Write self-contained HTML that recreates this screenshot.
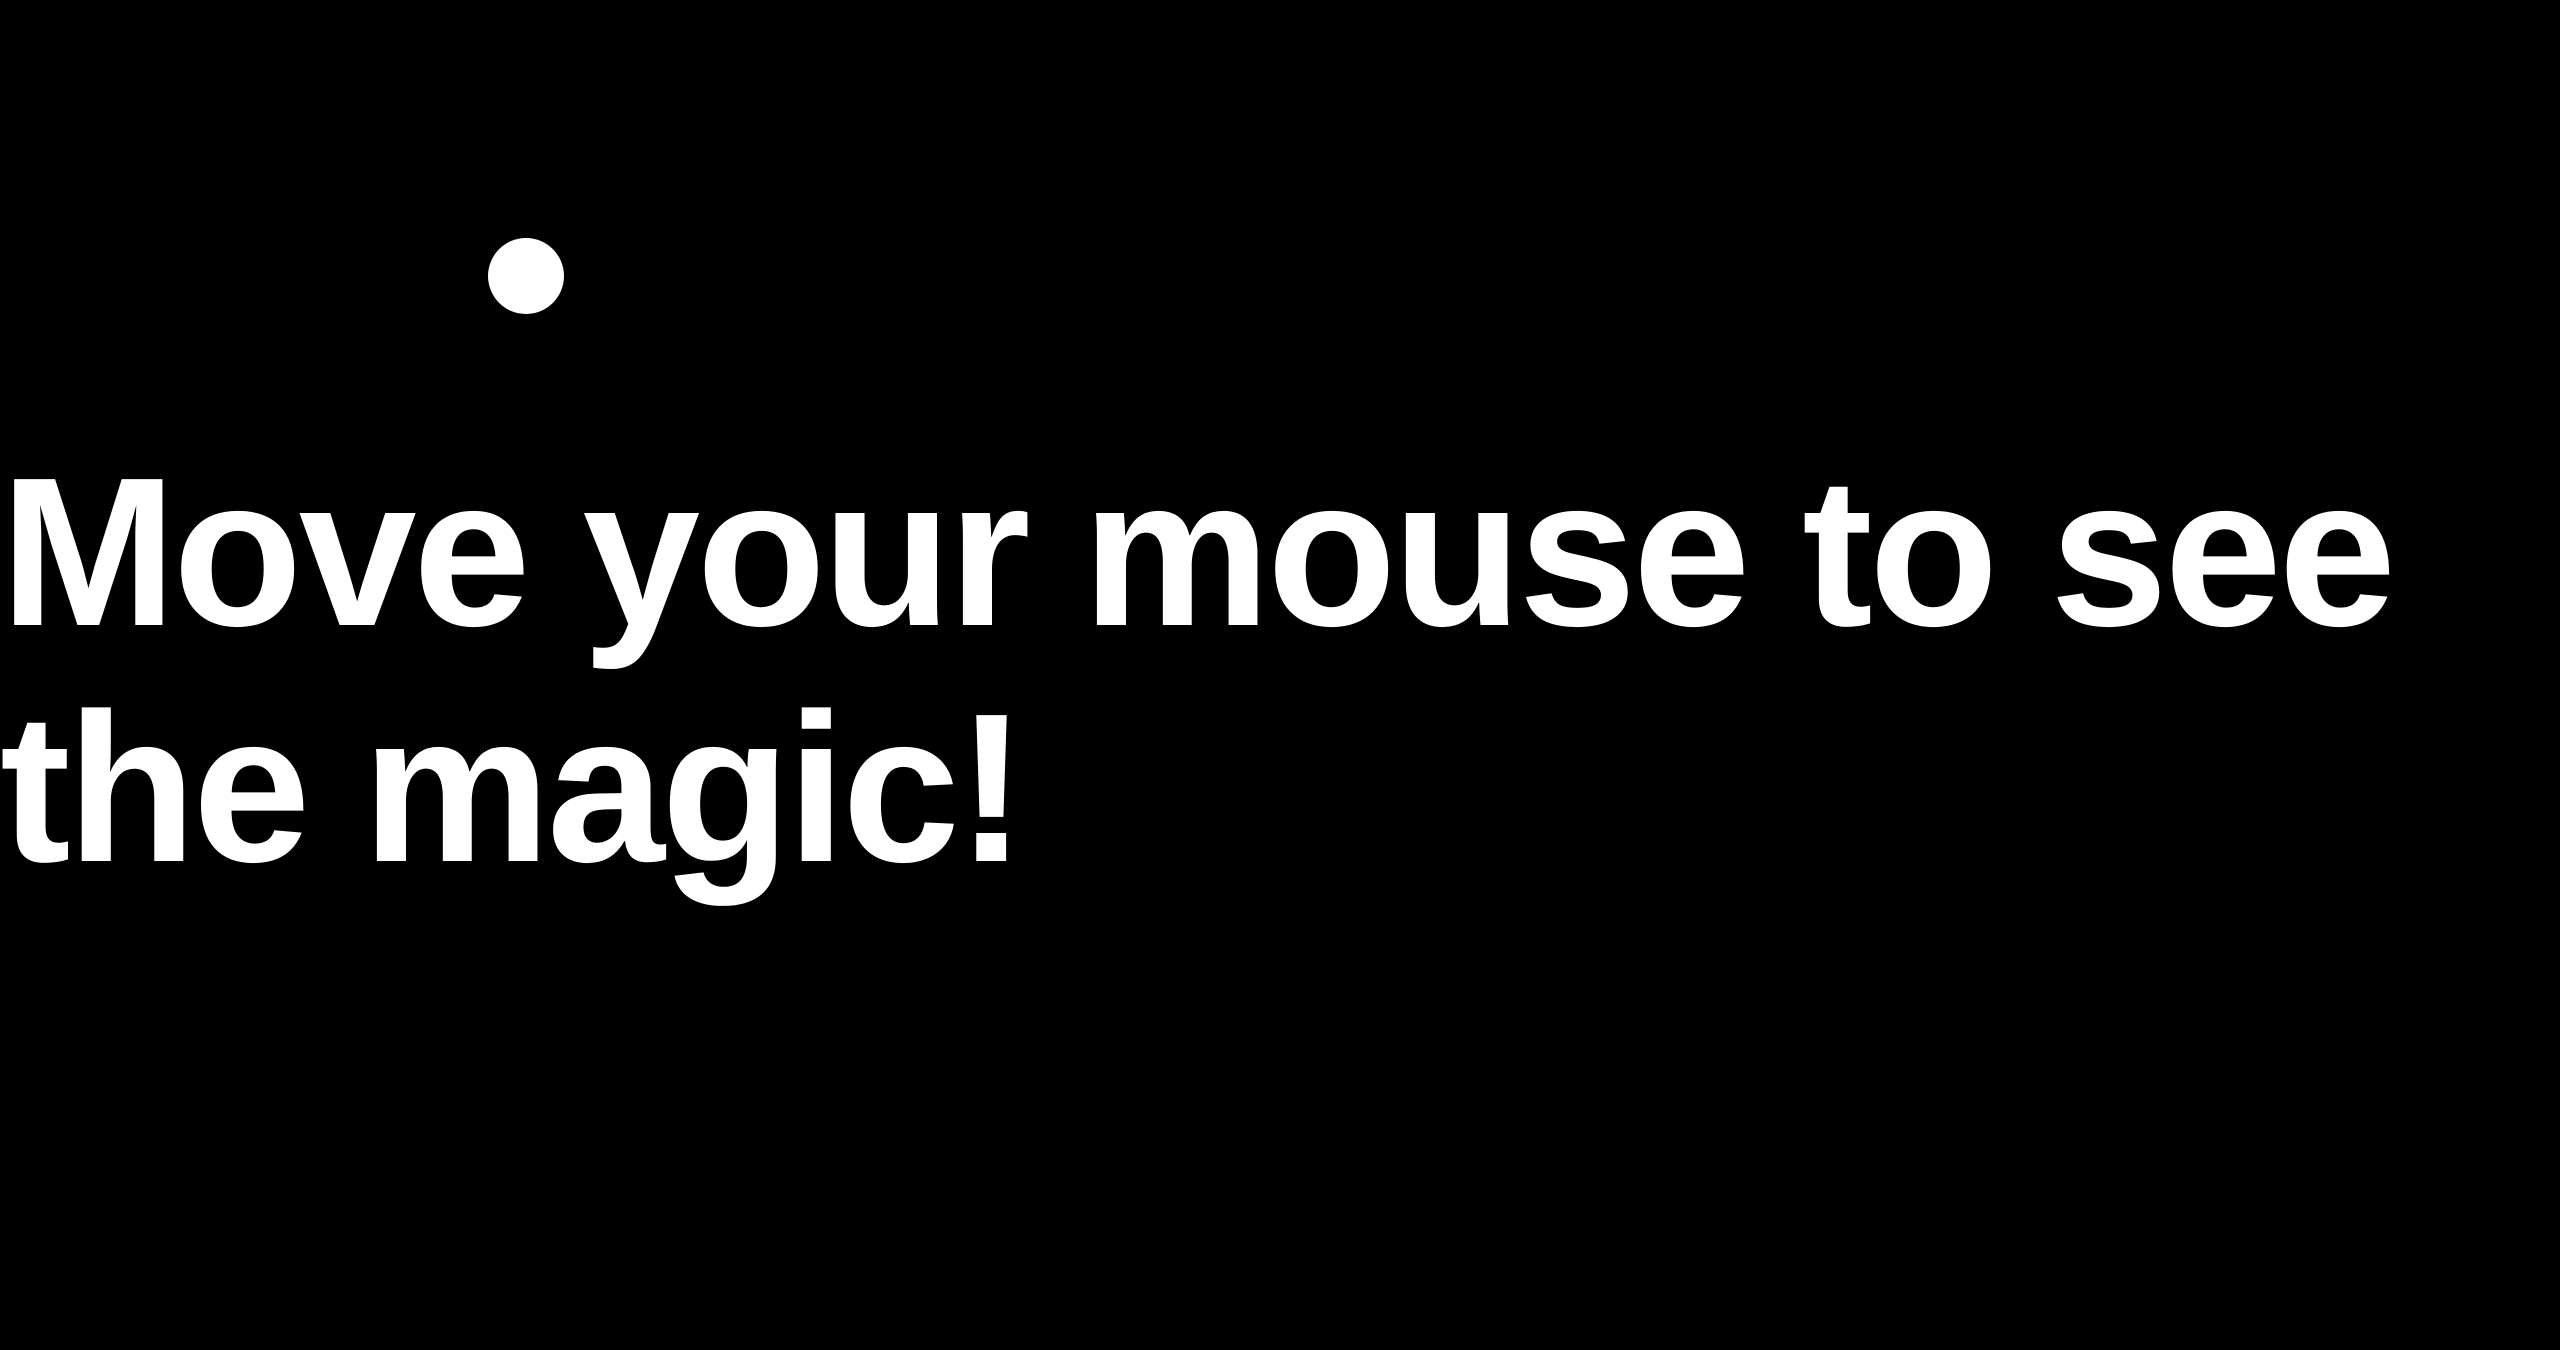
<!DOCTYPE html>
<html><head><meta charset="utf-8"><style>
html,body{margin:0;padding:0;background:#000;width:2560px;height:1350px;overflow:hidden}
.dot{position:absolute;left:488px;top:238px;width:76px;height:76px;border-radius:50%;background:#fff}
h1{position:absolute;left:0;top:434px;margin:0;font:bold 212px/236px "Liberation Sans",Arial,sans-serif;letter-spacing:-3.7px;color:#fff;white-space:nowrap}
</style></head><body>
<div class="dot"></div>
<h1>Move your mouse to see<br>the magic!</h1>
</body></html>
